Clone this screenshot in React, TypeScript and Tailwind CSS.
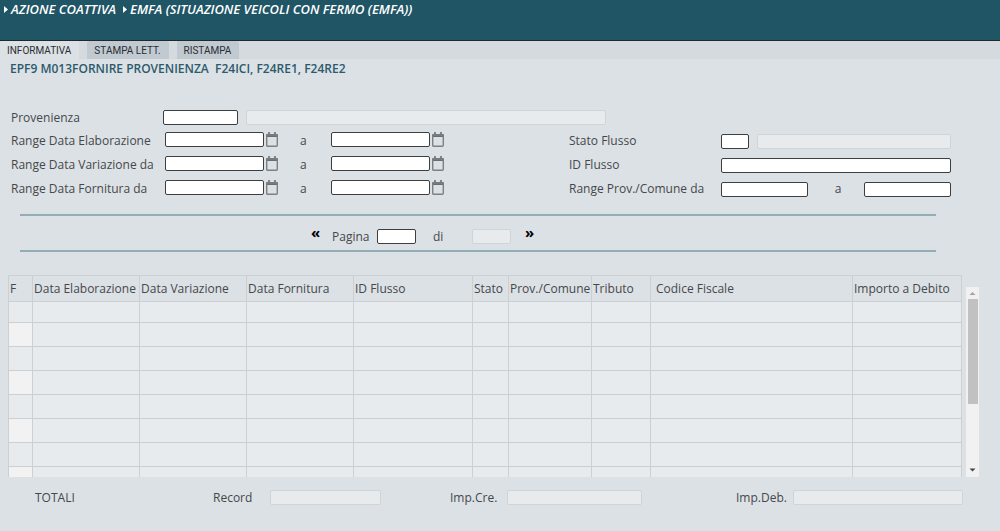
import { clsx } from "clsx";
import type { InputHTMLAttributes } from "react";

const TABS = ["INFORMATIVA", "STAMPA LETT.", "RISTAMPA"];

const DATE_RANGES = [
  { id: "elaborazione", label: "Range Data Elaborazione" },
  { id: "variazione", label: "Range Data Variazione da" },
  { id: "fornitura", label: "Range Data Fornitura da" },
];

const COLUMNS = [
  { title: "F", width: "w-[24px]" },
  { title: "Data Elaborazione", width: "w-[107px]" },
  { title: "Data Variazione", width: "w-[107px]" },
  { title: "Data Fornitura", width: "w-[107px]" },
  { title: "ID Flusso", width: "w-[119px]" },
  { title: "Stato", width: "w-[36px]" },
  { title: "Prov./Comune", width: "w-[83px]" },
  { title: "Tributo", width: "w-[59px]" },
  { title: "Codice Fiscale", width: "w-[202px]" },
  { title: "Importo a Debito", width: "w-[109px]" },
];

const ROWS = [0, 1, 2, 3, 4, 5, 6, 7];

function Field({ className, readOnly, ...rest }: InputHTMLAttributes<HTMLInputElement>) {
  return (
    <input
      type="text"
      readOnly={readOnly}
      className={clsx(
        "block h-[15px] min-w-0 rounded-xs border px-1 text-xs outline-none",
        readOnly ? "border-[#d0d4d7] bg-[#e7ebee]" : "border-[#3c3e40] bg-white",
        className
      )}
      {...rest}
    />
  );
}

function CalendarButton({ label }: { label: string }) {
  return (
    <button type="button" aria-label={label} className="pl-[2px]">
      <svg width="12" height="15" viewBox="0 0 12 15" className="block">
        <path d="M0 3.2Q0 2 1.2 2H10.8Q12 2 12 3.2V5H0Z" fill="#6b6e70" />
        <path d="M3 0V3M9 0V3" stroke="#6b6e70" strokeWidth="1.6" />
        <rect x="0.7" y="3" width="10.6" height="11.2" rx="1" fill="none" stroke="#7d8082" strokeWidth="1.4" />
      </svg>
    </button>
  );
}

function Crumb({ text }: { text: string }) {
  return (
    <a href="#" className="flex items-center gap-[3px]">
      <svg width="4" height="7" viewBox="0 0 4 7">
        <path d="M0 0L4 3.5L0 7Z" fill="#fff" />
      </svg>
      {text}
    </a>
  );
}

export default function App() {
  return (
    <div className="min-h-screen bg-[#dce1e5] font-['Open_Sans',sans-serif] text-[12px] leading-4 text-[#45484b]">
      <header className="h-[41px] border-b border-[#1d2b31] bg-[#205566] pt-px pl-1">
        <nav className="flex gap-[7px] text-[13px] font-semibold text-white italic">
          <Crumb text="AZIONE COATTIVA" />
          <Crumb text="EMFA (SITUAZIONE VEICOLI CON FERMO (EMFA))" />
        </nav>
      </header>

      {/* Tabs */}
      <div className="flex h-[18px] gap-2 bg-[#d5dade] font-['Roboto',sans-serif] text-[10px] text-[#2b2e31]">
        {TABS.map((tab, i) => (
          <button
            key={tab}
            type="button"
            className={clsx("rounded-t-xs pt-px pr-2 pl-[7px]", i === 0 ? "bg-[#dce1e5]" : "bg-[#c1c9d1]")}
          >
            {tab}
          </button>
        ))}
      </div>

      <p className="pt-[2px] pl-[10px] font-semibold whitespace-pre text-[#2c5a6b]">
        EPF9 M013FORNIRE PROVENIENZA  F24ICI, F24RE1, F24RE2
      </p>

      {/* Search filters */}
      <form className="pt-[30px] pr-[49px] pl-[11px]">
        <div className="grid h-5 grid-cols-[152px_75fr_8px_360fr_345fr] items-center">
          <label htmlFor="provenienza" className="pt-[2px]">
            Provenienza
          </label>
          <Field id="provenienza" />
          <Field readOnly aria-label="Descrizione provenienza" className="col-start-4" />
        </div>

        <div className="grid grid-cols-[558fr_382fr]">
          <div>
            {DATE_RANGES.map(({ id, label }) => (
              <div key={id} className="grid h-6 grid-cols-[154px_99fr_16px_51fr_99fr_16px_123fr] items-center">
                <label htmlFor={`${id}-da`} className="pt-1">
                  {label}
                </label>
                <Field id={`${id}-da`} />
                <CalendarButton label={`${label}: scegli data iniziale`} />
                <label htmlFor={`${id}-a`} className="pt-1 pl-5">
                  a
                </label>
                <Field id={`${id}-a`} />
                <CalendarButton label={`${label}: scegli data finale`} />
              </div>
            ))}
          </div>

          <div className="pt-[2px]">
            <div className="grid h-6 grid-cols-[152px_28fr_8px_194fr] items-center">
              <label htmlFor="stato">Stato Flusso</label>
              <Field id="stato" />
              <Field readOnly aria-label="Descrizione stato" className="col-start-4" />
            </div>
            <div className="grid h-6 grid-cols-[152px_230fr] items-center">
              <label htmlFor="id-flusso">ID Flusso</label>
              <Field id="id-flusso" />
            </div>
            <div className="grid h-6 grid-cols-[152px_87fr_56fr_87fr] items-center">
              <label htmlFor="prov-da">Range Prov./Comune da</label>
              <Field id="prov-da" />
              <label htmlFor="prov-a" className="pl-1 text-center">
                a
              </label>
              <Field id="prov-a" />
            </div>
          </div>
        </div>
      </form>

      {/* Pager */}
      <div className="mt-[13px] mr-16 ml-5 grid h-[38px] grid-cols-[291fr_21px_45px_39px_56px_39px_14px_411fr] items-center border-y-2 border-[#93adb6] pt-[6px]">
        <button
          type="button"
          aria-label="Pagina precedente"
          className="col-start-2 pb-2 text-left text-[15px] font-bold text-black"
        >
          «
        </button>
        <label htmlFor="pagina" className="pt-[2px]">
          Pagina
        </label>
        <Field id="pagina" />
        <label htmlFor="pagine" className="pt-[2px] pl-[17px]">
          di
        </label>
        <Field id="pagine" readOnly />
        <button
          type="button"
          aria-label="Pagina successiva"
          className="col-start-8 justify-self-start pb-2 text-[15px] font-bold text-black"
        >
          »
        </button>
      </div>

      {/* Results */}
      <div className="mt-[23px] mr-[21px] ml-2 flex h-[202px] gap-1">
        <div className="min-w-0 flex-1 overflow-hidden">
          <table className="w-full table-fixed border-collapse">
            <thead>
              <tr className="h-[26px]">
                {COLUMNS.map(({ title, width }) => (
                  <th
                    key={title}
                    scope="col"
                    className={clsx(
                      "border border-[#cdd0d3] p-0 text-left font-normal whitespace-nowrap",
                      title === "Codice Fiscale" ? "pl-[5px]" : "pl-px",
                      width
                    )}
                  >
                    {title}
                  </th>
                ))}
              </tr>
            </thead>
            <tbody>
              {ROWS.map((row) => (
                <tr key={row} className={row === 0 ? "h-[21px]" : "h-6"}>
                  {COLUMNS.map(({ title }, col) => (
                    <td
                      key={title}
                      className={clsx(
                        "border border-[#cdd0d3] p-0",
                        col === 0 && row % 2 === 1 ? "bg-[#f2f2f2]" : "bg-[#e7ebee]"
                      )}
                    />
                  ))}
                </tr>
              ))}
            </tbody>
          </table>
        </div>

        {/* Scrollbar */}
        <div className="mt-3 flex w-[13px] flex-col items-center bg-[#f1f1f1]">
          <svg width="13" height="12" viewBox="0 0 13 12" className="shrink-0">
            <path d="M3.5 8L6.5 5L9.5 8Z" fill="#a3a3a3" />
          </svg>
          <div className="h-[105px] w-[10px] bg-[#c1c1c1]" />
          <svg width="13" height="12" viewBox="0 0 13 12" className="mt-auto shrink-0">
            <path d="M3.5 3.5L6.5 6.5L9.5 3.5Z" fill="#444" />
          </svg>
        </div>
      </div>

      {/* Totals */}
      <div className="mt-3 grid h-[17px] grid-cols-[178fr_57px_111fr_69fr_57px_135fr_94fr_57px_170fr] items-center pr-[37px] pl-[35px]">
        <span>TOTALI</span>
        <label htmlFor="record">Record</label>
        <Field id="record" readOnly />
        <label htmlFor="imp-cre" className="col-start-5">
          Imp.Cre.
        </label>
        <Field id="imp-cre" readOnly />
        <label htmlFor="imp-deb" className="col-start-8">
          Imp.Deb.
        </label>
        <Field id="imp-deb" readOnly />
      </div>
    </div>
  );
}
